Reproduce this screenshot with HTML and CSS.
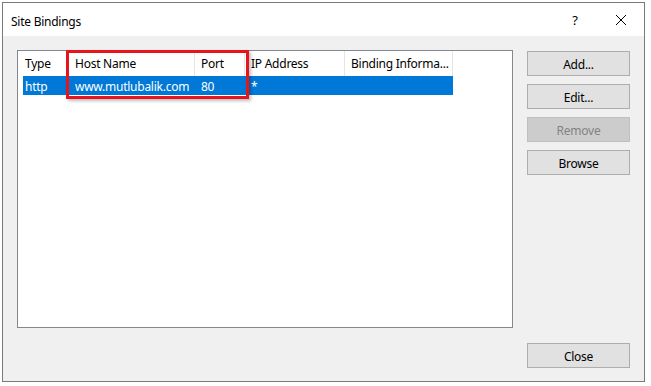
FILE: index.html
```html
<!DOCTYPE html>
<html lang="en">

<head>
    <meta charset="UTF-8">
    <title>Site Bindings</title>
    <link rel="stylesheet" href="styles.css">
</head>

<body>
    <div class="window">
        <div class="titlebar">
            <span class="title">Site Bindings</span>
            <div class="caption-btn">?</div>
            <div class="caption-btn">
                <svg width="10" height="10" viewBox="0 0 10 10">
                    <path d="M0 0 L10 10 M10 0 L0 10" stroke="#000" stroke-width="1" fill="none"/>
                </svg>
            </div>
        </div>

        <div class="client">
            <div class="list">
                <div class="list-header">
                    <div class="col col-type">Type</div>
                    <div class="col col-host">Host Name</div>
                    <div class="col col-port">Port</div>
                    <div class="col col-ip">IP Address</div>
                    <div class="col col-info">Binding Informa...</div>
                </div>
                <div class="list-row selected">
                    <div class="cell col-type">http</div>
                    <div class="cell col-host">www.mutlubalik.com</div>
                    <div class="cell col-port">80</div>
                    <div class="cell col-ip">*</div>
                    <div class="cell col-info"></div>
                </div>
                <div class="highlight"></div>
            </div>

            <div class="actions">
                <button class="btn">Add...</button>
                <button class="btn">Edit...</button>
                <button class="btn" disabled>Remove</button>
                <button class="btn">Browse</button>
            </div>

            <div class="footer">
                <button class="btn">Close</button>
            </div>
        </div>
    </div>
</body>

</html>
```

FILE: styles.css
```css
body {
    margin: 0;
    background-color: #fff;
    font-family: "Noto Sans", "Open Sans", sans-serif;
    font-size: 12px;
    letter-spacing: -0.25px;
    color: #000;
}

.window {
    margin: 2px;
    width: 641px;
    height: 378px;
    border: 1px solid #7a7a7a;
    background-color: #f0f0f0;
    display: flex;
    flex-direction: column;
}

.titlebar {
    height: 33px;
    background-color: #fff;
    display: flex;
    align-items: center;
    padding-left: 8px;
}

.title {
    flex: 1;
    padding-top: 3px;
}

.caption-btn {
    width: 46px;
    height: 33px;
    display: flex;
    align-items: center;
    justify-content: center;
    font-size: 13px;
}

.caption-btn:first-of-type {
    padding-left: 2px;
}

.client {
    flex: 1;
    display: grid;
    grid-template-columns: 496px 103px;
    grid-template-rows: 278px 25px;
    column-gap: 14px;
    row-gap: 15px;
    padding: 14px;
}

.list {
    position: relative;
    background-color: #fff;
    border: 1px solid #828790;
}

.list-header {
    display: flex;
    height: 25px;
}

.col {
    box-sizing: border-box;
    height: 25px;
    line-height: 24px;
    padding-top: 1px;
    padding-left: 6px;
    border-right: 1px solid #e5e5e5;
    white-space: nowrap;
    overflow: hidden;
}

.col-type {
    width: 49px;
}

.col.col-type {
    padding-left: 7px;
}

.col-host {
    width: 128px;
}

.col.col-host {
    padding-left: 8px;
}

.col-port {
    width: 50px;
}

.col-ip {
    width: 100px;
}

.col-info {
    width: 108px;
}

.list-row {
    display: flex;
    height: 19px;
    line-height: 21px;
    margin-left: 5px;
    width: 430px;
}

.list-row.selected {
    background-color: #0078d7;
    color: #fff;
}

.cell {
    box-sizing: border-box;
    padding-left: 6px;
    white-space: nowrap;
}

.cell.col-type {
    width: 44px;
    padding-left: 2px;
}

.cell.col-host {
    padding-left: 8px;
}

.highlight {
    position: absolute;
    left: 48px;
    top: -1px;
    width: 177px;
    height: 43px;
    border: 3px solid #e8141c;
    box-shadow: 2px 2px 3px rgba(0, 0, 0, 0.25);
}

.actions {
    display: flex;
    flex-direction: column;
    gap: 8px;
    padding-top: 1px;
}

.footer {
    grid-column: 2;
}

.btn {
    width: 103px;
    height: 25px;
    padding: 1px 0 0;
    background-color: #e1e1e1;
    border: 1px solid #adadad;
    font-family: inherit;
    font-size: 12px;
    letter-spacing: inherit;
    color: #000;
}

.btn:disabled {
    background-color: #cccccc;
    border-color: #bfbfbf;
    color: #838383;
}
```
